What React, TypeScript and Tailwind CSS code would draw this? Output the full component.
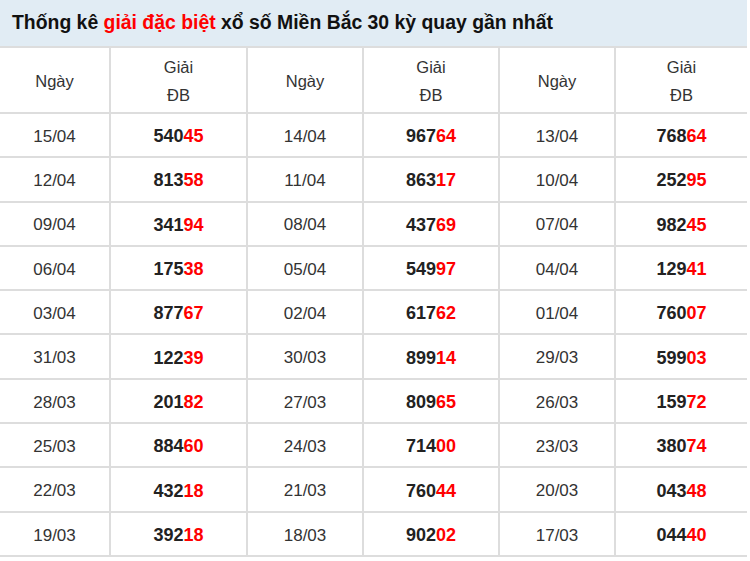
import React from "react";

const rows: [string, string, string, string, string, string][] = [
  ["15/04", "54045", "14/04", "96764", "13/04", "76864"],
  ["12/04", "81358", "11/04", "86317", "10/04", "25295"],
  ["09/04", "34194", "08/04", "43769", "07/04", "98245"],
  ["06/04", "17538", "05/04", "54997", "04/04", "12941"],
  ["03/04", "87767", "02/04", "61762", "01/04", "76007"],
  ["31/03", "12239", "30/03", "89914", "29/03", "59903"],
  ["28/03", "20182", "27/03", "80965", "26/03", "15972"],
  ["25/03", "88460", "24/03", "71400", "23/03", "38074"],
  ["22/03", "43218", "21/03", "76044", "20/03", "04348"],
  ["19/03", "39218", "18/03", "90202", "17/03", "04440"],
];

function Num({ v }: { v: string }) {
  return (
    <span className="font-bold text-[18px] text-[#222]">
      {v.slice(0, 3)}
      <span className="text-[#ff0000]">{v.slice(3)}</span>
    </span>
  );
}

export default function App() {
  return (
    <div
      className="w-[750px] h-[561px] bg-white overflow-hidden"
      style={{ fontFamily: '"Liberation Sans", Arial, sans-serif' }}
    >
      <div className="w-[747px]">
        <div className="h-[46px] bg-[#e1ecf4] flex items-center pl-[12px] text-[19.4px] font-bold text-[#111]">
          Thống kê&nbsp;<span className="text-[#ff0000]">giải đặc biệt</span>&nbsp;xổ số Miền Bắc 30 kỳ quay gần nhất
        </div>
        <div className="grid grid-cols-[109px_135px_114px_134px_114px_131px] grid-rows-[64px_repeat(10,42.3px)] gap-[2px] bg-[#dddddd] py-[2px]">
          {[0, 1, 2].map((i) => (
            <React.Fragment key={i}>
              <div className="bg-white flex items-center justify-center pt-[3px] text-[16.5px] text-[#333]">
                Ngày
              </div>
              <div className="bg-white flex flex-col items-center justify-center pt-[2px] text-[16.5px] leading-[28px] text-[#333]">
                <span>Giải</span>
                <span>ĐB</span>
              </div>
            </React.Fragment>
          ))}
          {rows.map((r, ri) => (
            <React.Fragment key={ri}>
              {r.map((c, ci) =>
                ci % 2 === 0 ? (
                  <div
                    key={ci}
                    className="bg-white flex items-center justify-center pt-[3px] text-[17px] text-[#333]"
                  >
                    {c}
                  </div>
                ) : (
                  <div key={ci} className="bg-white flex items-center justify-center pt-[3px]">
                    <Num v={c} />
                  </div>
                )
              )}
            </React.Fragment>
          ))}
        </div>
      </div>
    </div>
  );
}
